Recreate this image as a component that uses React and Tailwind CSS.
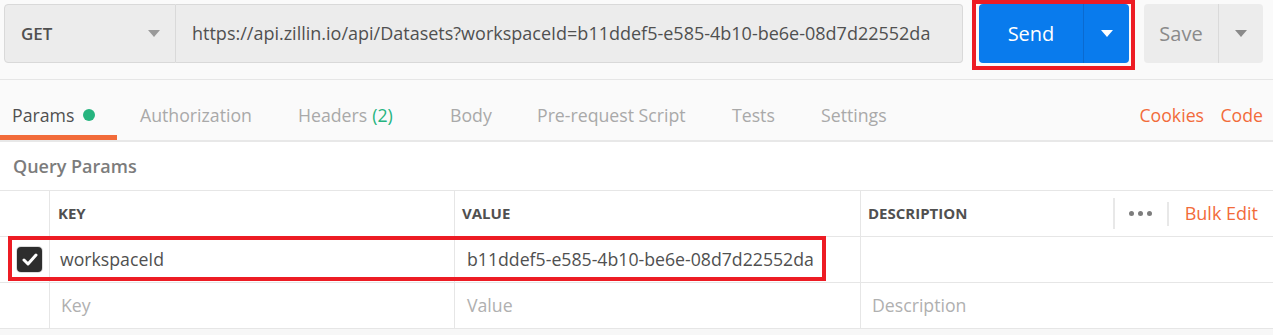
import React from "react";

function Caret({ color, className }) {
  return (
    <svg width="12" height="7" viewBox="0 0 12 7" className={className}>
      <path d="M0 0 L12 0 L6 7 Z" fill={color} />
    </svg>
  );
}

function Tab({ w, label, extra, active }) {
  return (
    <div
      className={`h-full shrink-0 flex items-start pt-[23px] leading-[24px] ${w} ${
        active ? "text-[#505050]" : "text-[#a9a9a9]"
      }`}
    >
      <span>{label}</span>
      {extra}
    </div>
  );
}

export default function App() {
  return (
    <div className="relative w-[1273px] h-[335px] overflow-hidden bg-white font-['Open_Sans',sans-serif] text-[17.7px] text-[#505050]">
      {/* Request bar */}
      <div className="h-[80px] bg-[#fafafa] border-b border-[#e6e6e6] flex items-start pt-[4px] pl-[4px]">
        <div className="w-[172px] h-[59px] shrink-0 bg-[#ececec] border border-[#d9d9d9] rounded-l-[4px] flex items-center justify-between pl-[16px] pr-[15px]">
          <span className="font-semibold text-[17px] text-[#505050]">GET</span>
          <Caret color="#9a9a9a" />
        </div>
        <div className="w-[787px] h-[59px] shrink-0 bg-[#ececec] border border-l-0 border-[#d9d9d9] rounded-r-[4px] flex items-center pl-[16px] text-[18px] text-[#505050] whitespace-nowrap overflow-hidden">
          https://api.zillin.io/api/Datasets?workspaceId=b11ddef5-e585-4b10-be6e-08d7d22552da
        </div>
        <div className="ml-[16px] w-[150px] h-[59px] shrink-0 bg-[#097bed] rounded-[4px] flex">
          <div className="w-[104px] flex items-center justify-center text-white text-[20px] font-medium">
            Send
          </div>
          <div className="w-[1px] bg-[#0a6ad0]" />
          <div className="flex-1 flex items-center justify-center">
            <Caret color="#ffffff" />
          </div>
        </div>
        <div className="ml-[15px] w-[119px] h-[59px] shrink-0 bg-[#ececec] rounded-[4px] flex">
          <div className="w-[74px] flex items-center justify-center text-[#8a8a8a] text-[20px] font-medium">
            Save
          </div>
          <div className="w-[1px] bg-[#dadada]" />
          <div className="flex-1 flex items-center justify-center">
            <Caret color="#8a8a8a" />
          </div>
        </div>
      </div>

      {/* Tabs */}
      <div className="h-[62px] bg-[#fafafa] border-b-2 border-[#e8e8e8] flex">
        <div className="w-[117px] h-full shrink-0 pl-[12px] border-b-[5px] border-[#f26b3a] flex items-start pt-[23px] leading-[24px] text-[#505050]">
          <span>Params</span>
          <span className="ml-[9px] mt-[6px] w-[12px] h-[12px] rounded-full bg-[#26b47f]" />
        </div>
        <div className="w-[23px] shrink-0" />
        <Tab w="w-[158px]" label="Authorization" />
        <Tab
          w="w-[152px]"
          label="Headers"
          extra={<span className="ml-[5px] text-[#26b47f]">(2)</span>}
        />
        <Tab w="w-[87px]" label="Body" />
        <Tab w="w-[195px]" label="Pre-request Script" />
        <Tab w="w-[89px]" label="Tests" />
        <Tab w="flex-1" label="Settings" />
        <div className="h-full shrink-0 flex items-start pt-[23px] leading-[24px] text-[#f26b3a] pr-[10px]">
          <span className="w-[81px]">Cookies</span>
          <span>Code</span>
        </div>
      </div>

      {/* Query params label */}
      <div className="h-[48px] flex items-center pl-[13px] font-semibold text-[18px] text-[#7c7c7c]">
        Query Params
      </div>

      {/* Table */}
      <div className="border-t border-[#e6e6e6]">
        <div className="h-[46px] border-b border-[#e6e6e6] flex text-[15px] font-bold text-[#505050]">
          <div className="w-[50px] shrink-0 border-r border-[#e6e6e6]" />
          <div className="w-[405px] shrink-0 border-r border-[#e6e6e6] flex items-center pl-[8px]">
            KEY
          </div>
          <div className="w-[406px] shrink-0 border-r border-[#e6e6e6] flex items-center pl-[7px]">
            VALUE
          </div>
          <div className="flex-1 flex items-center justify-between pl-[7px] pr-[15px]">
            <span>DESCRIPTION</span>
            <div className="flex items-center">
              <div className="w-[2px] h-[31px] bg-[#e8e8e8]" />
              <div className="ml-[14px] flex gap-[4px]">
                <span className="w-[5px] h-[5px] rounded-full bg-[#7d7d7d]" />
                <span className="w-[5px] h-[5px] rounded-full bg-[#7d7d7d]" />
                <span className="w-[5px] h-[5px] rounded-full bg-[#7d7d7d]" />
              </div>
              <div className="ml-[15px] w-[2px] h-[24px] bg-[#e8e8e8]" />
              <span className="ml-[16px] font-normal text-[18px] text-[#f26b3a]">Bulk Edit</span>
            </div>
          </div>
        </div>

        <div className="h-[46px] border-b border-[#e6e6e6] flex">
          <div className="w-[50px] shrink-0 border-r border-[#e6e6e6] flex items-center pl-[17px]">
            <div className="w-[25px] h-[25px] rounded-[4px] bg-[#2d2d2d] ring-1 ring-[#dcdcdc] flex items-center justify-center">
              <svg width="16" height="13" viewBox="0 0 16 13">
                <path
                  d="M2 7 L6 11 L14 2"
                  fill="none"
                  stroke="#ffffff"
                  strokeWidth="3"
                  strokeLinecap="round"
                  strokeLinejoin="round"
                />
              </svg>
            </div>
          </div>
          <div className="w-[405px] shrink-0 border-r border-[#e6e6e6] flex items-center pl-[10px]">
            workspaceId
          </div>
          <div className="w-[406px] shrink-0 border-r border-[#e6e6e6] flex items-center pl-[12px]">
            b11ddef5-e585-4b10-be6e-08d7d22552da
          </div>
          <div className="flex-1" />
        </div>

        <div className="h-[46px] border-b border-[#e6e6e6] flex text-[#b0b0b0]">
          <div className="w-[50px] shrink-0 border-r border-[#e6e6e6]" />
          <div className="w-[405px] shrink-0 border-r border-[#e6e6e6] flex items-center pl-[11px]">
            Key
          </div>
          <div className="w-[406px] shrink-0 border-r border-[#e6e6e6] flex items-center pl-[12px]">
            Value
          </div>
          <div className="flex-1 flex items-center pl-[11px]">Description</div>
        </div>
        <div className="h-[20px] bg-[#f7f7f7]" />
      </div>

      {/* Annotation boxes */}
      <div className="absolute left-[972px] top-0 w-[163px] h-[70px] border-4 border-[#ed1c24]" />
      <div className="absolute left-[8px] top-[236px] w-[818px] h-[45px] border-4 border-[#ed1c24]" />
    </div>
  );
}
